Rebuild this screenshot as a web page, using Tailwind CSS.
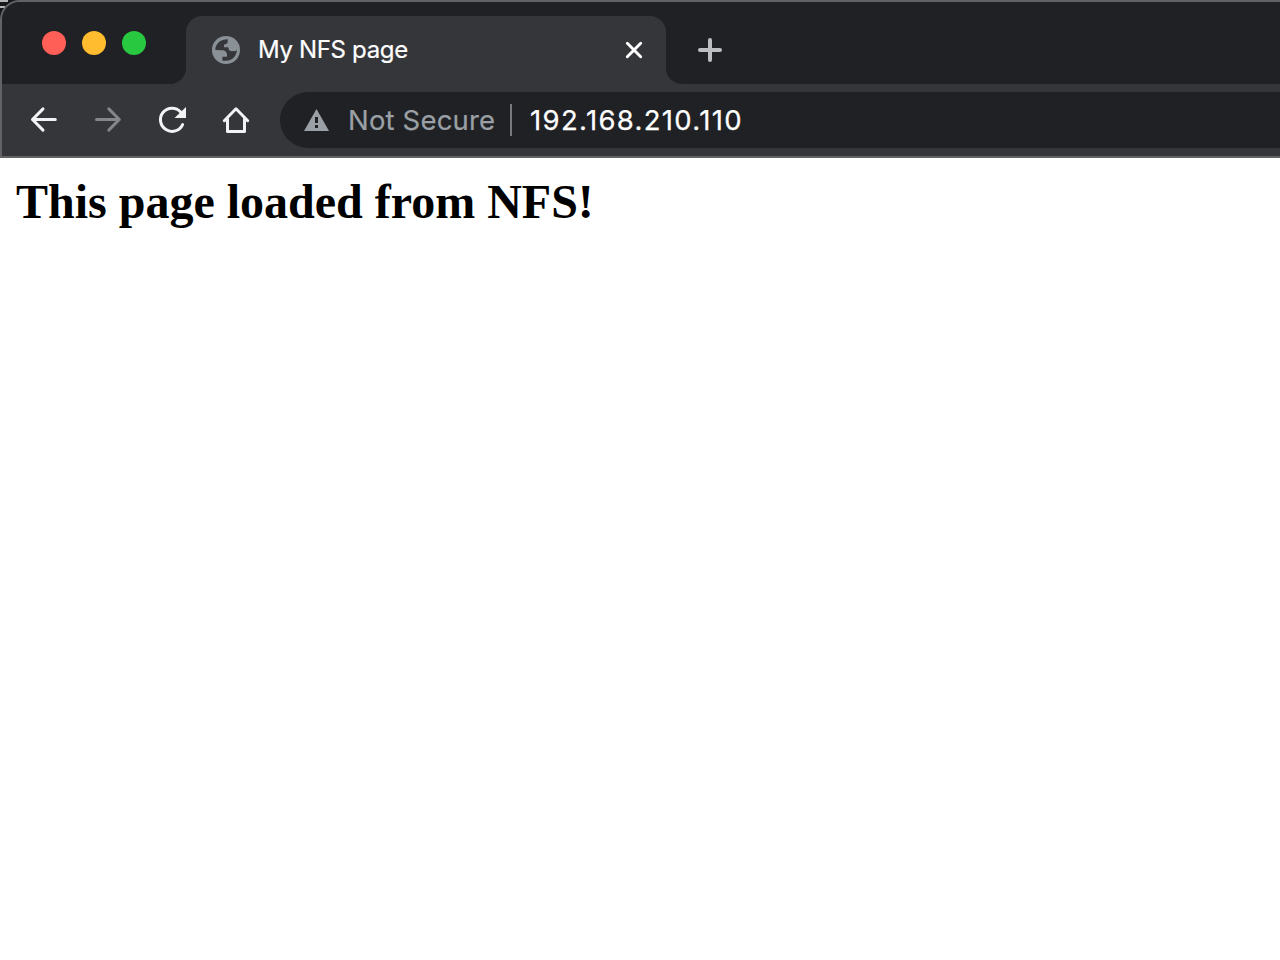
<!DOCTYPE html>
<html lang="en">
<head>
<meta charset="utf-8">
<title>My NFS page</title>
<script src="https://cdn.jsdelivr.net/npm/@tailwindcss/browser@4"></script>
</head>
<body class="bg-white overflow-hidden">
<div class="w-[1280px] h-[960px] flex flex-col overflow-hidden font-['Inter',sans-serif]">
  <header class="relative h-[158px] shrink-0 bg-[#18181a]">
    <svg class="absolute left-0 top-0" width="12" height="12" fill="none"><path d="M0 0H8V2H0zM0 6H5V8H0z" fill="#b5b5b8"/></svg>
    <div class="relative h-full w-[1300px] rounded-tl-[20px] border-2 border-[#636366] bg-[#35363a] overflow-hidden flex flex-col">
      <div class="h-[82px] flex items-end bg-[#35363a]">
        <div class="w-[184px] h-[82px] bg-[#202124] rounded-br-[16px] flex gap-4 pl-10 pt-[29px]">
          <span class="size-6 rounded-full bg-[#ff5f57]"></span>
          <span class="size-6 rounded-full bg-[#febc2e]"></span>
          <span class="size-6 rounded-full bg-[#28c840]"></span>
        </div>
        <div class="w-[480px] h-[82px] bg-[#202124] pt-[14px] shrink-0">
          <div class="h-[68px] rounded-t-[16px] bg-[#35363a] flex items-center pl-[26px] pr-[22px]">
            <svg class="shrink-0" width="28" height="28" viewBox="0 0 28 28"><circle cx="14" cy="14" r="14" fill="#899197"/><path d="M3.3 14C3.3 8 8.4 3.3 15.7 3.3V6Q15.3 8.4 12 8.4V11.3H16Q16.8 11.3 16.8 14Q18.5 15.5 21 15Q24 15.5 24.8 14C24.8 20 20 24.8 13.8 24.8H10.4V20.8H15V18Q14 14.2 10.7 14.2Z" fill="#35363a"/></svg>
            <span class="ml-[18px] text-[24px] leading-[30px] tracking-[-0.34px] text-white whitespace-nowrap [-webkit-text-stroke:0.2px_#fff]">My NFS page</span>
            <svg class="ml-auto" width="20" height="20" fill="none" stroke="#fff" stroke-width="2.9" stroke-linecap="round"><path d="M3.3 3.3 16.7 16.7M16.7 3.3 3.3 16.7"/></svg>
          </div>
        </div>
        <div class="flex-1 h-[82px] bg-[#202124] rounded-bl-[16px] pl-[30px] pt-[34px]">
          <svg width="28" height="28" fill="none" stroke="#bdbec2" stroke-width="4" stroke-linecap="round"><path d="M4 14H24M14 4V24"/></svg>
        </div>
      </div>
      <div class="h-[72px] flex items-center pl-[26px]">
        <svg class="shrink-0" width="32" height="32" viewBox="0 0 32 32" fill="none" stroke="#f1f3f4" stroke-width="3" stroke-linecap="round" stroke-linejoin="round"><path d="M4.5 15.5H27.3M15 4.9 4.5 15.5 15 26.1"/></svg>
        <svg class="ml-8 shrink-0" width="32" height="32" viewBox="0 0 32 32" fill="none" stroke="#858689" stroke-width="3" stroke-linecap="round" stroke-linejoin="round"><path d="M4.5 15.5H27.3M16.8 4.9 27.3 15.5 16.8 26.1"/></svg>
        <svg class="ml-8 shrink-0" width="32" height="32" viewBox="0 0 32 32" fill="none"><path d="M24.6 7.9A11.6 11.6 0 1 0 26.6 20.6" stroke="#f1f3f4" stroke-width="3" stroke-linecap="round"/><path d="M30 3V14H18.5Z" fill="#f1f3f4"/></svg>
        <svg class="ml-8 shrink-0" width="32" height="32" viewBox="0 0 32 32" fill="none" stroke="#f1f3f4" stroke-width="3" stroke-linecap="round" stroke-linejoin="round"><path d="M4.3 16.7 16 4.8 27.7 16.7M7.5 15V27.5H24.5V15"/></svg>
        <div class="ml-7 h-14 flex-1 bg-[#202124] rounded-l-full flex items-center pl-6">
          <svg class="shrink-0" width="25" height="22" viewBox="0 0 25 22"><path d="M12.5 0 25 22H0Z" fill="#9aa0a6"/><path d="M11 8H14V14H11zM11 16H14V19H11z" fill="#202124"/></svg>
          <span class="ml-[19px] w-[162px] text-[27.5px] leading-[36px] tracking-[0.17px] text-[#9aa0a6] whitespace-nowrap [-webkit-text-stroke:0.2px_#9aa0a6]">Not Secure</span>
          <span class="w-[2px] h-8 bg-[#77797d]"></span>
          <span class="ml-[18px] text-[27.5px] leading-[36px] tracking-[1.33px] text-white whitespace-nowrap [-webkit-text-stroke:0.25px_#fff]">192.168.210.110</span>
        </div>
      </div>
    </div>
  </header>
  <main class="flex-1 bg-white px-4 pt-[16px]">
    <h1 class="font-['Liberation_Serif',serif] font-bold text-[48px] leading-[56px] text-black whitespace-nowrap">This page loaded from NFS!</h1>
  </main>
</div>
</body>
</html>
